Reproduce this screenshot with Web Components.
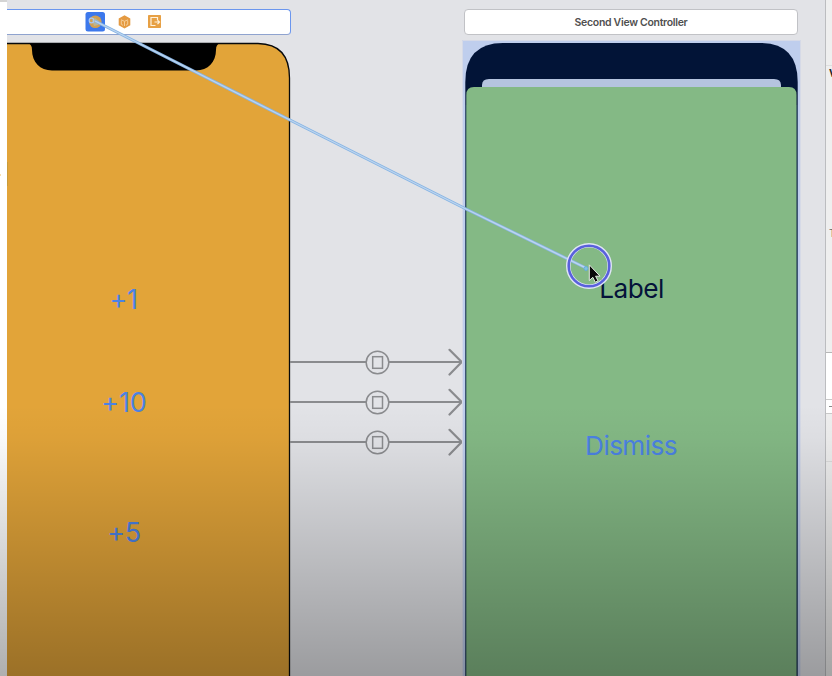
<!DOCTYPE html>
<html lang="en"><head><meta charset="utf-8"><title>Storyboard</title>
<style>html,body{margin:0;height:100%;overflow:hidden}</style></head>
<body>
<story-canvas>
  <side-navigator slot="left"></side-navigator>
  <first-scene>
    <scene-text y="299.500" x="116.500" size="27" tracking="-.3">+1</scene-text>
    <scene-text y="403" x="117" size="27" tracking="-.2">+10</scene-text>
    <scene-text y="533" x="117" size="27" tracking="-.3">+5</scene-text>
  </first-scene>
  <segue-arrow style="top:348px"></segue-arrow>
  <segue-arrow style="top:388px"></segue-arrow>
  <segue-arrow style="top:428px"></segue-arrow>
  <second-scene>
    <scene-text y="289" x="169.500" size="26.2" tracking="-.5" color="#05133a">Label</scene-text>
    <scene-text y="446" x="169" size="26.2" tracking="-.6">Dismiss</scene-text>
  </second-scene>
  <side-inspector slot="right"></side-inspector>
  <drag-link slot="over"></drag-link>
</story-canvas>
<script>
const define = (name, html, setup) => customElements.define(name, class extends HTMLElement {
  constructor() {
    super();
    this.attachShadow({ mode: 'open' }).innerHTML = html;
  }
  connectedCallback() { if (setup) setup(this); }
});

define('story-canvas', `<style>
:host{display:grid;grid-template-columns:7px 818px 7px;position:relative;width:832px;height:676px;overflow:hidden;background:#e2e3e7;font-family:Inter,"Liberation Sans",sans-serif}
.free{position:relative;height:676px}
.shade{position:absolute;left:0;top:405px;width:832px;height:271px;background:linear-gradient(rgba(0,0,0,0),rgba(0,0,0,.025) 12%,rgba(0,0,0,.315));pointer-events:none}
</style><slot name="left"></slot><div class="free"><slot></slot></div><slot name="right"></slot><div class="shade"></div><slot name="over"></slot>`);

define('side-navigator', `<style>
:host{display:flex;flex-direction:column;background:#fff;height:676px;position:relative}
.top{height:2px;background:#d4d4d4}
.dot{position:absolute;left:0;top:174px;width:1px;height:2px;background:#f6dfb0}
</style><div class="top"></div><i class="dot"></i>`);

define('scene-text', `<style>
:host{position:absolute;transform:translate(-50%,-50%);white-space:nowrap;line-height:1.2;color:#4b82e4}
</style><slot></slot>`, el => {
  el.style.left = el.getAttribute('x') + 'px';
  el.style.top = el.getAttribute('y') + 'px';
  el.style.fontSize = el.getAttribute('size') + 'px';
  el.style.letterSpacing = el.getAttribute('tracking') + 'px';
  if (el.hasAttribute('color')) el.style.color = el.getAttribute('color');
});

define('first-scene', `<style>
:host{position:absolute;left:0;top:0;width:284px;height:676px;overflow:hidden}
.bar{box-sizing:border-box;margin-top:9px;height:25.5px;border:1px solid #6b96ee;border-bottom-color:#8fa3cf;border-left:0;border-radius:0 4px 4px 0;background:#fff;width:284px}
svg{position:absolute;left:0;top:0;display:block}
</style><div class="bar"></div>
<svg width="284" height="676" viewBox="7 0 284 676">
<rect x="85.500" y="12" width="19.500" height="19.500" rx="2.500" fill="#3c78ec"/>
<circle cx="95.300" cy="21.800" r="6.300" fill="#d1a052"/>
<path d="M92 20l3-2 4 3-1 4-4 1z" fill="#b9b596"/>
<path d="M124.500 15.300l5.800 3.100v6.800l-5.800 3.300-5.800-3.300v-6.800z" fill="#e49a42"/>
<path d="M121 19.800l3.500 1.500 3.500-1.500M121.300 20.500v3.800l1.700 1M127.700 20.500v3.800l-1.700 1M124.500 21.500v4.500" fill="none" stroke="#f6d3a2" stroke-width=".9"/>
<rect x="148" y="15" width="13" height="13" rx=".7" fill="#e7a044"/>
<path d="M157.500 20v-2.500h-6.500v8h4.500M154.500 22h5M157.500 20.300l2 1.700-2 2.200" fill="none" stroke="#fff2dc" stroke-width="1.200"/>
<path d="M0 43.500H258Q289.500 44 289.500 78V680H0" fill="#e2a439" stroke="#07090c" stroke-width="1.300"/>
<path d="M28 43.500Q32 44 32 50C32 62 40 70.500 52 70.500H196C208 70.500 216 62 216 50Q216 44 220 43.500Z" fill="#000"/>
<path d="M7.500 162v24" stroke="#c99c3a"/>
</svg><slot></slot>`);

define('second-scene', `<style>
:host{position:absolute;left:455px;top:0;width:340px;height:676px}
.title{box-sizing:border-box;margin:9px 0 0 2px;width:334px;height:25.5px;border:1px solid #c1c2c6;border-radius:4px;background:#fff;display:flex;align-items:center;justify-content:center;padding-top:1px;font-size:10.5px;font-weight:600;letter-spacing:-.3px;color:#505050}
svg{position:absolute;left:0;top:0;display:block}
</style><div class="title"><span>Second View Controller</span></div>
<svg width="340" height="676" viewBox="462 0 340 676">
<rect x="462" y="40" width="338.500" height="636" fill="#bfceed"/>
<path d="M462.500 676V40.500H800.500V676" fill="none" stroke="#d6dae7"/>
<path d="M465.300 676V82Q465.300 43 503 43H760Q797.700 43 797.700 82V676Z" fill="#021437"/>
<path d="M465.800 676V105M797.200 676V105" stroke="#3d5877" stroke-width="1"/>
<path d="M482 90V85Q482 79 489 79H774Q781 79 781 85V90Z" fill="#b5c4df"/>
<path d="M466.300 676V95Q466.300 87 474 87H789Q796.500 87 796.500 95V676Z" fill="#84b985"/>
</svg><slot></slot>`);

define('segue-arrow', `<style>
:host{position:absolute;left:283px;width:174px;height:28px}
svg{display:block}
</style><svg width="174" height="28" viewBox="290 0 174 28" fill="none" stroke="#8a8b8e" stroke-width="1.900">
<path d="M290 14H366M389 14H462"/><circle cx="377.500" cy="14.500" r="11.300" stroke-width="1.500"/>
<rect x="372.700" y="8.700" width="9.800" height="11.600" stroke-width="1.500"/>
<path d="M449.500 1.800L461.700 14L449.500 26.500" stroke-width="2.200" stroke-linecap="round"/></svg>`);

define('side-inspector', `<style>
:host{box-sizing:border-box;display:flex;flex-direction:column;height:676px;border-left:1px solid #bcbdc0;background:#efefef;overflow:hidden;font-size:10px;color:#222}
.a{height:65px;border-bottom:1px solid #dedede}
.b{height:286px;display:flex;flex-direction:column;justify-content:flex-start;padding-left:3px}
.b b{line-height:14px}.b span{margin-top:146px;line-height:14px;color:#666}
.c{height:46px;border-top:1px solid #b6b6b6;background:#fff}
.d{height:13px;border-top:1px solid #c9c9c9;border-bottom:1px solid #c9c9c9;background:#fff;display:flex;align-items:center;justify-content:flex-end}
.d i{width:3px;height:1px;background:#888}
.e{height:47px;border-bottom:1px solid #dcdcdc}
</style><div class="a"></div><div class="b"><b>V</b><span>T</span></div><div class="c"></div><div class="d"><i></i></div><div class="e"></div>`);

define('drag-link', `<style>
:host{position:absolute;left:0;top:0;pointer-events:none}
svg{display:block}
</style><svg width="832" height="676" fill="none">
<path d="M95 21L290 120L466 209L586 268" stroke="#86b4e4" stroke-width="3"/>
<path d="M95 21L290 120L466 209L586 268" stroke="#bdd5ef" stroke-width="1.400"/>
<circle cx="91.500" cy="20.500" r="2.300" stroke="#a9c8f5" stroke-width="1.200"/>
<circle cx="586" cy="268.500" r="2" fill="#83c2dd" stroke="#64addb"/>
<circle cx="589" cy="266" r="20.700" stroke="#e0e5f6" stroke-width="4.600"/>
<circle cx="589" cy="266" r="20.300" stroke="#5961dc" stroke-width="2.600"/>
<path d="M589.300 264.800V280.500L592.800 277.300L595.300 282.200L598 280.800L595.600 276.200H600Z" fill="#0a0a0a" stroke="#e6ece5" stroke-width="1"/>
</svg>`);
</script>
</body></html>
